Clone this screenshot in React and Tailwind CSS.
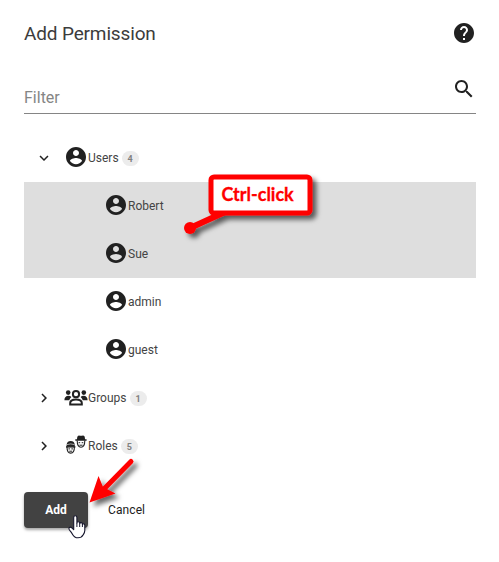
import React from 'react';

function Icon({ d, className }) {
  return (
    <svg viewBox="0 0 24 24" className={className} fill="currentColor">
      <path d={d} />
    </svg>
  );
}

const HELP =
  'M12 2C6.48 2 2 6.48 2 12s4.48 10 10 10 10-4.48 10-10S17.52 2 12 2zm1 17h-2v-2h2v2zm2.07-7.75l-.9.92C13.45 12.9 13 13.5 13 15h-2v-.5c0-1.1.45-2.1 1.17-2.83l1.24-1.26c.37-.36.59-.86.59-1.41 0-1.1-.9-2-2-2s-2 .9-2 2H8c0-2.21 1.79-4 4-4s4 1.79 4 4c0 .88-.36 1.68-.93 2.25z';
const SEARCH =
  'M15.5 14h-.79l-.28-.27C15.41 12.59 16 11.11 16 9.5 16 5.91 13.09 3 9.5 3S3 5.91 3 9.5 5.91 16 9.5 16c1.61 0 3.09-.59 4.23-1.57l.27.28v.79l5 4.99L20.49 19l-4.99-5zm-6 0C7.01 14 5 11.99 5 9.5S7.01 5 9.5 5 14 7.01 14 9.5 11.99 14 9.5 14z';
const ACCOUNT =
  'M12 2C6.48 2 2 6.48 2 12s4.48 10 10 10 10-4.48 10-10S17.52 2 12 2zm0 3c1.66 0 3 1.34 3 3s-1.34 3-3 3-3-1.34-3-3 1.34-3 3-3zm0 14.2c-2.5 0-4.71-1.28-6-3.22.03-1.99 4-3.08 6-3.08 1.99 0 5.97 1.09 6 3.08-1.29 1.94-3.5 3.22-6 3.22z';
const MORE = 'M16.59 8.59L12 13.17 7.41 8.59 6 10l6 6 6-6z';
const RIGHT = 'M10 6L8.59 7.41 13.17 12l-4.58 4.59L10 18l6-6z';

function GroupsIcon() {
  return (
    <svg viewBox="0 0 24 24" className="size-6" fill="currentColor">
      <circle cx="4.2" cy="6.6" r="2.3" />
      <circle cx="19.8" cy="6.6" r="2.3" />
      <circle cx="12" cy="8.2" r="3.1" fill="none" stroke="currentColor" strokeWidth="2" />
      <path d="M0.4 14.3c0-2.8 1.7-4.5 4-4.5 1.2 0 2.2.4 3 1.2-1 .8-1.8 1.900-2.200 3.300z" />
      <path d="M23.6 14.3c0-2.8-1.7-4.5-4-4.5-1.2 0-2.2.4-3 1.2 1 .8 1.8 1.900 2.200 3.300z" />
      <path d="M6.2 18.4v-1.3c0-2.2 2.6-3.5 5.8-3.5s5.8 1.3 5.8 3.5v1.3z" fill="none" stroke="currentColor" strokeWidth="2" />
    </svg>
  );
}

function RolesIcon() {
  return (
    <svg viewBox="0 0 24 24" className="size-6" fill="currentColor">
      <path d="M13 5.3c0-3 1-3.9 2-3.9.8 0 1.2.4 2 .4s1.2-.4 2-.4c1.2 0 2 .9 2 3.9h1.600v1.500H11.300V5.300z" />
      <path d="M13.2 6.5c0 4.800 1.700 6.700 3.800 6.700s3.800-1.900 3.800-6.700" fill="none" stroke="currentColor" strokeWidth="1.1" />
      <path d="M14.6 8.700h1.600M17.700 8.700h1.600M15.400 11.200h3.200" stroke="currentColor" strokeWidth="1" />
      <path d="M2.6 11.600c0-3.300 1.600-4.600 4.100-4.600s4.100 1.300 4.100 4.600v1.100H2.600z" />
      <path d="M2 12.200h9.400v1.400H2z" />
      <path d="M3 10.600q3.700-1.400 7.400 0" fill="none" stroke="#fff" strokeWidth=".6" />
      <path d="M3 13c0 4 1.600 6.100 3.700 6.100s3.700-2.100 3.700-6.100" fill="none" stroke="currentColor" strokeWidth="1.1" />
      <path d="M4.4 14.900h1.700M7.300 14.900H9M5.200 17.200h3" stroke="currentColor" strokeWidth="1" />
    </svg>
  );
}

function Badge({ children }) {
  return (
    <span className="mt-px ml-[3px] flex h-[15px] w-[17px] items-center justify-center rounded-full bg-[#ececec] text-[9px] font-bold text-[#808080]">
      {children}
    </span>
  );
}

function Branch({ open, icon, label, count }) {
  return (
    <div className="flex h-12 items-center pl-[11px]">
      <Icon d={open ? MORE : RIGHT} className="size-[18px]" />
      <span className="ml-[11px]">{icon}</span>
      <span className="text-[#444]">{label}</span>
      <Badge>{count}</Badge>
    </div>
  );
}

function User({ name, selected }) {
  return (
    <div className={`flex h-12 items-center pl-20 ${selected ? 'bg-[#dedede]' : ''}`}>
      <Icon d={ACCOUNT} className="-mt-0.5 size-6" />
      <span className="text-[#444]">{name}</span>
    </div>
  );
}

function Annotations() {
  return (
    <svg viewBox="0 0 499 562" className="pointer-events-none absolute inset-0 h-[562px] w-[499px]">
      <defs>
        <filter id="shadow" x="-20%" y="-20%" width="150%" height="160%">
          <feDropShadow dx="4" dy="4" stdDeviation="2.5" floodColor="#000" floodOpacity=".6" />
        </filter>
      </defs>
      <g filter="url(#shadow)">
        <path d="M190 228L225 212" stroke="#f00" strokeWidth="6" />
        <circle cx="190" cy="228" r="6" fill="#f00" />
        <rect x="211" y="177" width="99" height="36" rx="3" fill="#fff" stroke="#f00" strokeWidth="5" />
      </g>
      <g filter="url(#shadow)" fill="#f00">
        <path d="M131 461.5L103 490" stroke="#f00" strokeWidth="5" strokeLinecap="round" />
        <path d="M89.5 502.5L98.5 476L103 487L115.5 493.5z" />
      </g>
      <path
        d="M73.7 517.5c0-2.3 3.2-2.3 3.2 0v5.5c0-1.7 2.7-1.7 2.8 0v.6c.2-1.4 2.600-1.200 2.700.2v.8c.4-1.200 2.300-1 2.400.6v5.300c0 2-.8 3.100-1.600 4.300-1.100 2.200-2.700 3-5.200 3-3.100 0-4.300-1.300-5.400-3.400-.9-1.600-2.200-3.100-3.300-4.700-1.300-2.100.9-3.300 2.500-1.900l1.900 1.800z"
        fill="#fff"
        stroke="#15152c"
        strokeWidth="1.1"
        strokeLinejoin="round"
      />
      <path d="M76.9 523v4M79.7 523.5v3.5M82.4 524.5v2.5" stroke="#15152c" />
    </svg>
  );
}

export default function App() {
  return (
    <main className="relative h-[562px] w-[499px] overflow-hidden bg-white px-6 pt-5 font-['Roboto',sans-serif] text-xs text-[#212121]">
      <header className="flex h-[26px] w-[452px] items-center justify-between">
        <h1 className="pt-0.5 text-[19px] leading-6 font-normal tracking-[-0.15px] text-[#3c3c3c]">Add Permission</h1>
        <Icon d={HELP} className="size-6" />
      </header>
      <div className="mt-[30px] flex h-[38px] w-[452px] items-start justify-between border-b border-[#858585]">
        <span className="pt-2.5 text-base leading-6 text-[#858585]">Filter</span>
        <Icon d={SEARCH} className="mt-px size-6" />
      </div>
      <div className="mt-5 w-[452px]">
        <Branch open icon={<Icon d={ACCOUNT} className="-mt-0.5 size-6" />} label="Users" count="4" />
        <User name="Robert" selected />
        <User name="Sue" selected />
        <User name="admin" />
        <User name="guest" />
        <Branch icon={<GroupsIcon />} label="Groups" count="1" />
        <Branch icon={<RolesIcon />} label="Roles" count="5" />
      </div>
      <footer className="mt-[22px] flex h-9 items-center">
        <button className="h-9 w-16 rounded bg-[#424242] text-xs font-bold text-white shadow-[0_2px_3px_rgba(0,0,0,0.35)]">Add</button>
        <button className="ml-5 text-xs tracking-[0.1px]">Cancel</button>
      </footer>
      <Annotations />
      <span className="absolute top-[184px] left-[221.5px] font-['Lato',sans-serif] text-[18px] leading-5 font-bold text-[#f00] [-webkit-text-stroke:0.3px_#f00]">
        Ctrl-click
      </span>
    </main>
  );
}
